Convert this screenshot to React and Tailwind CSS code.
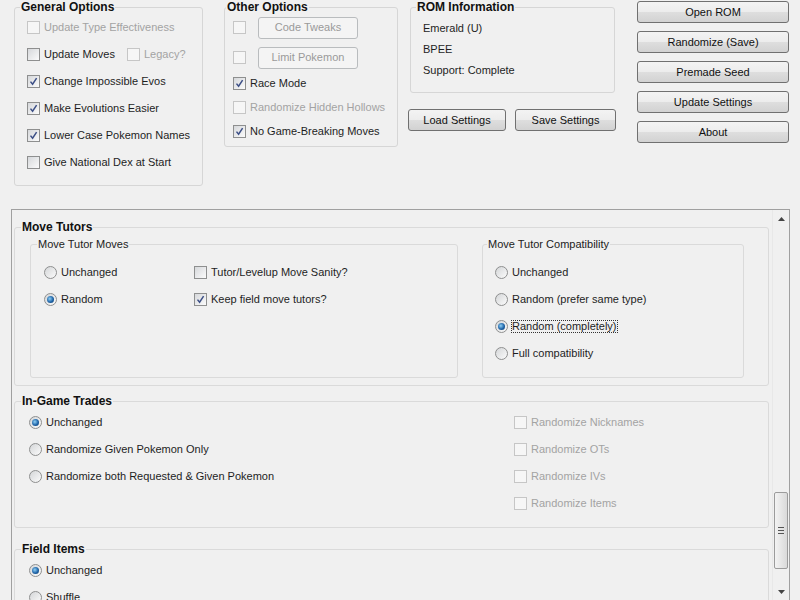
import React from "react";

function Check({ checked, disabled }) {
  return (
    <span
      className={
        disabled
          ? "w-[13px] h-[13px] shrink-0 border border-[#c6c6c6] bg-[#f6f6f6] flex items-center justify-center"
          : "w-[13px] h-[13px] shrink-0 border border-[#8e8f8f] bg-[linear-gradient(135deg,#d6d8db,#fbfbfb)] flex items-center justify-center"
      }
    >
      {checked && (
        <svg width="9" height="9" viewBox="0 0 9 9">
          <path d="M1.5 4.6 L3.6 7.2 L7.6 1.2" stroke="#3c4f86" strokeWidth="1.5" fill="none" />
        </svg>
      )}
    </span>
  );
}

function Radio({ checked }) {
  return (
    <span className="w-[13px] h-[13px] shrink-0 rounded-full border border-[#8e8f8f] bg-[linear-gradient(135deg,#d4d6d8,#fbfbfb)] flex items-center justify-center">
      {checked && (
        <span className="w-[7px] h-[7px] rounded-full bg-[radial-gradient(circle_at_40%_40%,#8fd0f5,#1f64a8_55%,#0b3663)]" />
      )}
    </span>
  );
}

function CheckRow({ checked, disabled, label, h = "h-[27px]" }) {
  return (
    <div className={"flex items-center gap-[4px] " + h}>
      <Check checked={checked} disabled={disabled} />
      <span className={disabled ? "text-[#a3a3a3]" : "text-[#1e1e1e]"}>{label}</span>
    </div>
  );
}

function RadioRow({ checked, label, focus }) {
  return (
    <div className="flex items-center gap-[4px] h-[27px]">
      <Radio checked={checked} />
      <span className={focus ? "text-[#1e1e1e] outline-1 outline-dotted outline-[#333]" : "text-[#1e1e1e]"}>
        {label}
      </span>
    </div>
  );
}

function Button({ children, w, disabled }) {
  return (
    <div
      className={
        disabled
          ? "h-[22px] flex items-center justify-center rounded-[3px] border border-[#b9bcbe] bg-[#f4f4f4] text-[#9a9a9a] " + w
          : "h-[22px] flex items-center justify-center rounded-[3px] border border-[#707070] bg-[linear-gradient(#f3f3f3_0%,#ececec_50%,#dedede_51%,#d2d2d2_100%)] text-[#111] " + w
      }
    >
      {children}
    </div>
  );
}

export default function App() {
  return (
    <div className="w-[800px] h-[600px] overflow-hidden bg-[#f0f0f0] text-[11px] leading-none text-[#1e1e1e] font-['Liberation_Sans',Arial,sans-serif]">
      <div className="flex items-start h-[209px]">
        {/* General Options */}
        <fieldset className="ml-[14px] w-[189px] h-[186px] border border-[#d6d6d6] rounded-[3px] p-0 m-0">
          <legend className="ml-[5px] px-[1px] text-[12px] font-bold leading-[14px] text-[#111]">General Options</legend>
          <div className="pl-[12px]">
            <CheckRow disabled label="Update Type Effectiveness" />
            <div className="flex items-center h-[27px]">
              <div className="flex items-center gap-[4px] w-[100px]">
                <Check />
                <span>Update Moves</span>
              </div>
              <div className="flex items-center gap-[4px]">
                <Check disabled />
                <span className="text-[#a3a3a3]">Legacy?</span>
              </div>
            </div>
            <CheckRow checked label="Change Impossible Evos" />
            <CheckRow checked label="Make Evolutions Easier" />
            <CheckRow checked label="Lower Case Pokemon Names" />
            <CheckRow label="Give National Dex at Start" />
          </div>
        </fieldset>

        {/* Other Options */}
        <fieldset className="ml-[21px] w-[174px] h-[147px] border border-[#d6d6d6] rounded-[3px] p-0 m-0">
          <legend className="ml-[1px] px-[1px] text-[12px] font-bold leading-[14px] text-[#111]">Other Options</legend>
          <div className="pl-[8px]">
            <div className="flex items-center gap-[12px] h-[27px]">
              <Check disabled />
              <Button w="w-[100px]" disabled>Code Tweaks</Button>
            </div>
            <div className="flex items-center gap-[12px] h-[27px] mt-[3px]">
              <Check disabled />
              <Button w="w-[100px]" disabled>Limit Pokemon</Button>
            </div>
            <CheckRow checked label="Race Mode" h="h-[25px]" />
            <CheckRow disabled label="Randomize Hidden Hollows" h="h-[23px]" />
            <CheckRow checked label="No Game-Breaking Moves" h="h-[24px]" />
          </div>
        </fieldset>

        {/* ROM info column */}
        <div className="ml-[10px] w-[208px] flex flex-col">
          <fieldset className="ml-[2px] w-[205px] h-[93px] border border-[#d6d6d6] rounded-[3px] p-0 m-0">
            <legend className="ml-[5px] px-[1px] text-[12px] font-bold leading-[14px] text-[#111]">ROM Information</legend>
            <div className="pl-[12px] pt-[4px]">
              <div className="h-[21px] flex items-center">Emerald (U)</div>
              <div className="h-[21px] flex items-center">BPEE</div>
              <div className="h-[21px] flex items-center">Support: Complete</div>
            </div>
          </fieldset>
          <div className="mt-[16px] flex gap-[9px]">
            <Button w="w-[99px]">Load Settings</Button>
            <Button w="w-[102px]">Save Settings</Button>
          </div>
        </div>

        {/* Right buttons */}
        <div className="ml-[21px] w-[152px] pt-[1px] flex flex-col gap-[8px]">
          <Button w="w-full">Open ROM</Button>
          <Button w="w-full">Randomize (Save)</Button>
          <Button w="w-full">Premade Seed</Button>
          <Button w="w-full">Update Settings</Button>
          <Button w="w-full">About</Button>
        </div>
      </div>

      {/* Scroll panel */}
      <div className="ml-[11px] w-[779px] h-[392px] border border-[#a0a0a0] flex overflow-hidden">
        <div className="w-[760px] flex flex-col">
          {/* Move Tutors */}
          <fieldset className="mt-[10px] ml-[2px] w-[755px] h-[166px] shrink-0 border border-[#dadada] rounded-[3px] p-0 m-0">
            <legend className="ml-[6px] px-[1px] text-[12px] font-bold leading-[14px] text-[#111]">Move Tutors</legend>
            <div className="flex pl-[15px] pt-[3px]">
              <fieldset className="w-[428px] h-[141px] border border-[#dadada] rounded-[3px] p-0 m-0">
                <legend className="ml-[6px] px-[1px] leading-[14px] text-[#222]">Move Tutor Moves</legend>
                <div className="flex pl-[13px] pt-[8px]">
                  <div className="w-[150px]">
                    <RadioRow label="Unchanged" />
                    <RadioRow checked label="Random" />
                  </div>
                  <div>
                    <CheckRow label="Tutor/Levelup Move Sanity?" />
                    <CheckRow checked label="Keep field move tutors?" />
                  </div>
                </div>
              </fieldset>
              <fieldset className="ml-[24px] w-[262px] h-[141px] border border-[#dadada] rounded-[3px] p-0 m-0">
                <legend className="ml-[4px] px-[1px] leading-[14px] text-[#222]">Move Tutor Compatibility</legend>
                <div className="pl-[12px] pt-[8px]">
                  <RadioRow label="Unchanged" />
                  <RadioRow label="Random (prefer same type)" />
                  <RadioRow checked focus label="Random (completely)" />
                  <RadioRow label="Full compatibility" />
                </div>
              </fieldset>
            </div>
          </fieldset>

          {/* In-Game Trades */}
          <fieldset className="mt-[8px] ml-[2px] w-[755px] h-[134px] shrink-0 border border-[#dadada] rounded-[3px] p-0 m-0">
            <legend className="ml-[6px] px-[1px] text-[12px] font-bold leading-[14px] text-[#111]">In-Game Trades</legend>
            <div className="flex pl-[14px] pt-[1px]">
              <div className="w-[485px]">
                <RadioRow checked label="Unchanged" />
                <RadioRow label="Randomize Given Pokemon Only" />
                <RadioRow label="Randomize both Requested & Given Pokemon" />
              </div>
              <div>
                <CheckRow disabled label="Randomize Nicknames" />
                <CheckRow disabled label="Randomize OTs" />
                <CheckRow disabled label="Randomize IVs" />
                <CheckRow disabled label="Randomize Items" />
              </div>
            </div>
          </fieldset>

          {/* Field Items */}
          <fieldset className="mt-[14px] ml-[2px] w-[755px] h-[90px] shrink-0 border border-[#dadada] rounded-[3px] p-0 m-0">
            <legend className="ml-[6px] px-[1px] text-[12px] font-bold leading-[14px] text-[#111]">Field Items</legend>
            <div className="pl-[14px] pt-[1px]">
              <RadioRow checked label="Unchanged" />
              <RadioRow label="Shuffle" />
            </div>
          </fieldset>
        </div>

        {/* Scrollbar */}
        <div className="w-[17px] shrink-0 flex flex-col border-l border-[#e8e8e8] bg-[#f0f0f0]">
          <div className="h-[17px] flex items-center justify-center">
            <svg width="7" height="4" viewBox="0 0 7 4">
              <path d="M0 4 L3.5 0 L7 4 Z" fill="#444" />
            </svg>
          </div>
          <div className="mt-[265px] mx-[1px] h-[77px] rounded-[2px] border border-[#9b9b9b] bg-[linear-gradient(90deg,#f3f3f3,#e6e6e6_50%,#d9d9d9)] flex flex-col items-center justify-center gap-[2px]">
            <span className="w-[6px] h-[1px] bg-[#555]" />
            <span className="w-[6px] h-[1px] bg-[#555]" />
            <span className="w-[6px] h-[1px] bg-[#555]" />
          </div>
          <div className="mt-auto h-[17px] flex items-center justify-center">
            <svg width="7" height="4" viewBox="0 0 7 4">
              <path d="M0 0 L7 0 L3.5 4 Z" fill="#444" />
            </svg>
          </div>
        </div>
      </div>
    </div>
  );
}
